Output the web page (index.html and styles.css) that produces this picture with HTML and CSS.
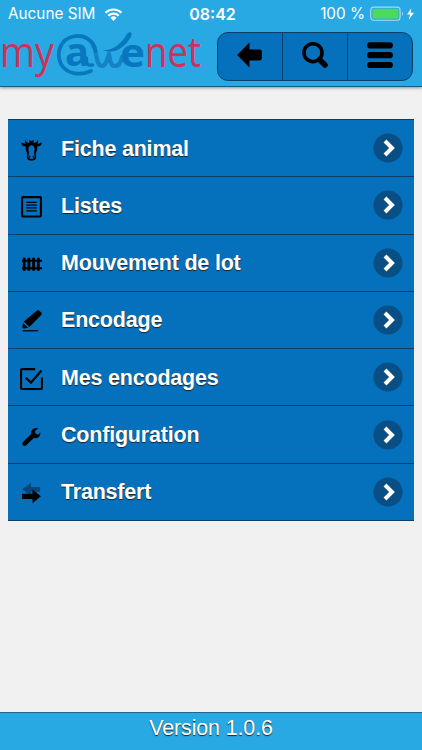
FILE: index.html
```html
<!DOCTYPE html>
<html lang="fr">
<head>
<meta charset="utf-8">
<title>myawenet</title>
<link rel="stylesheet" href="styles.css">
</head>
<body>
<header class="header">
  <div class="status">
    <div class="carrier"><span>Aucune SIM</span>
      <svg class="wifi" viewBox="0 0 18 13"><g fill="none" stroke="#fff" stroke-width="2.2"><path d="M1 4.8a11.4 11.4 0 0 1 16 0M3.8 7.8a7.4 7.4 0 0 1 10.4 0"/></g><path d="M9 13L5.9 9.8a4.5 4.5 0 0 1 6.200 0z" fill="#fff"/></svg>
    </div>
    <div class="clock">08:42</div>
    <div class="power"><span>100 %</span>
      <svg class="battery" viewBox="0 0 48 16"><rect x=".7" y="1" width="30" height="13.4" rx="3" fill="none" stroke="#a4dcf5" stroke-width="1.2"/><rect x="2.5" y="2.7" width="26.5" height="10" rx="1.3" fill="#4cd95f"/><path d="M32.7 5.5q2 2.2 0 4.5z" fill="#a4dcf5"/><path d="M42.2 2L37.8 8.500h3.100l-1.300 5.300 5.200-7h-3.300z" fill="#fff"/></svg>
    </div>
  </div>
  <div class="toolbar">
    <svg class="logo" viewBox="0 0 204 52">
      <g class="logo-red">
        <text x="0" y="37" textLength="54" lengthAdjust="spacingAndGlyphs">my</text>
        <text x="145" y="37" textLength="56" lengthAdjust="spacingAndGlyphs">net</text>
      </g>
      <g class="logo-blue">
        <path d="M93 15C95 18 95.500 20 96 24C97 30 98 36 102 36C106 36 107 29 109 24C110 29 110 36 115 36C119 36 121 32 122 27" fill="none" stroke="#1383c6" stroke-width="4.200" stroke-linecap="round" stroke-linejoin="round"/>
        <path d="M91 41C80 46 66 44 61 34C55 21 62 9 73 6.500C85 4 94 11 95.500 21" fill="none" stroke="#0877bf" stroke-width="3.800" stroke-linecap="round"/>
        <text x="65" y="36" textLength="24" lengthAdjust="spacingAndGlyphs">a</text>
        <text x="120" y="36.500" textLength="25" lengthAdjust="spacingAndGlyphs">e</text>
        <path d="M86.500 28v3q0 5 6 4" fill="none" stroke="#0877bf" stroke-width="3.400" stroke-linecap="round"/>
        <path d="M103 20C113 21 122 13 127 4C130 .5 133 3 131 7C124 18 114 25 103 20" fill="#0877bf"/>
      </g>
    </svg>
    <nav class="buttons">
      <a><svg viewBox="0 0 26 26"><path d="M1 13L12.500 1.500V8H22q2 0 2 2v6q0 2-2 2h-9.500v6.500z"/></svg></a>
      <a><svg viewBox="0 0 28 28"><circle cx="12" cy="11.700" r="9" fill="none" stroke="#000" stroke-width="3.600"/><path d="M18.500 18.500l5.500 5.500" stroke="#000" stroke-width="5.500" stroke-linecap="round"/></svg></a>
      <a><svg viewBox="0 0 28 28"><path d="M4.200 4.400h19.600M4.200 14.200h19.600M4.200 24h19.600" stroke="#000" stroke-width="6.200" stroke-linecap="round"/></svg></a>
    </nav>
  </div>
</header>
<main class="content">
  <ul class="menu">
    <li><svg class="icon" viewBox="0 0 22 22"><path d="M6 1.500Q5 5 9 4.500h4Q17 5 16 1.500q2.500 2.500.5 4.300L21 4.300Q20.500 8 16.500 8.200q.5 3-1.300 6.100l.3 4.700q-1 2.800-4.500 2.800T6.500 19l.3-4.700Q5 11.200 5.500 8.200 1.500 8 1 4.300l4.500 1.500Q3.500 4 6 1.500zM9.500 7.500q-2.500 2-.8 6.300l-.9 4.400q1.200 2 3.200 2t3.200-2l-.9-4.400q1.700-4.300-.8-6.300-1.500-1-3 0z" fill-rule="evenodd"/><path d="M8.800 1.800l2.200 1 2.200-1-.5 4H9.300z"/><path d="M8.500 17.800h1.400M12.100 17.800h1.400" stroke="#000" stroke-width="1.500"/></svg><span>Fiche animal</span><svg class="chevron" viewBox="0 0 30 30"><circle cx="15" cy="15" r="14.600"/><path d="M12 8l7 7-7 7"/></svg></li>
    <li><svg class="icon" viewBox="0 0 22 22"><rect x="2" y="2" width="18" height="18.500" rx=".8" fill="none" stroke="#000" stroke-width="2"/><path d="M6 7h10M6 9.700h10M6 12.400h10M6 15.100h10" stroke="#000" stroke-width="1.200"/></svg><span>Listes</span><svg class="chevron" viewBox="0 0 30 30"><circle cx="15" cy="15" r="14.600"/><path d="M12 8l7 7-7 7"/></svg></li>
    <li><svg class="icon" viewBox="0 0 22 22"><path d="M4 5.500v12.500M8.500 5.500v12.500M13 5.500v12.500M17.500 5.500v12.500" stroke="#000" stroke-width="2.700"/><path d="M2 8.300h19M2 15.500h19" stroke="#000" stroke-width="2"/></svg><span>Mouvement de lot</span><svg class="chevron" viewBox="0 0 30 30"><circle cx="15" cy="15" r="14.600"/><path d="M12 8l7 7-7 7"/></svg></li>
    <li><svg class="icon" viewBox="0 0 22 22"><path d="M16.300 1.400q1-.9 2 0l2.200 2.200q1 1 0 2L9 17.200l-5.500-5zM2.800 13.400l5 4.500-4.200.8q-1.300 0-1.400-1.400z"/><path d="M2.600 20.800h14.800" stroke="#000" stroke-width="1.200"/></svg><span>Encodage</span><svg class="chevron" viewBox="0 0 30 30"><circle cx="15" cy="15" r="14.600"/><path d="M12 8l7 7-7 7"/></svg></li>
    <li><svg class="icon" viewBox="0 0 22 22"><path d="M14.500 2H2q-1 0-1 1v17q0 1 1 1h18q1 0 1-1V10" fill="none" stroke="#000" stroke-width="2"/><path d="M5.500 10.300l5 4.700L20.500 3.300" fill="none" stroke="#000" stroke-width="2.200"/></svg><span>Mes encodages</span><svg class="chevron" viewBox="0 0 30 30"><circle cx="15" cy="15" r="14.600"/><path d="M12 8l7 7-7 7"/></svg></li>
    <li><svg class="icon" viewBox="0 0 22 22"><path d="M4.400 18.700l8.300-7.900" stroke="#000" stroke-width="4.400" stroke-linecap="round"/><path d="M17.600 4.400l-3.200 2 .3 2.600 2.500 1.200 2.100-2.300q.7 3.400-2 5.100-3.200 1.700-5.900-1.200-2.200-3.400.3-6.300 2.400-2.500 5.900-1.100z"/></svg><span>Configuration</span><svg class="chevron" viewBox="0 0 30 30"><circle cx="15" cy="15" r="14.600"/><path d="M12 8l7 7-7 7"/></svg></li>
    <li><svg class="icon" viewBox="0 0 22 22"><path d="M2 8l8.500-6v3.700h8.800v4.600h-8.800V14z" fill="#064679"/><path d="M20 14.600l-8-6.500v4H2v5.200h10v4z"/></svg><span>Transfert</span><svg class="chevron" viewBox="0 0 30 30"><circle cx="15" cy="15" r="14.600"/><path d="M12 8l7 7-7 7"/></svg></li>
  </ul>
</main>
<footer class="footer">Version 1.0.6</footer>
</body>
</html>
```
FILE: styles.css
```css
* { box-sizing: border-box; }
body {
  margin: 0;
  height: 750px;
  display: flex;
  flex-direction: column;
  overflow: hidden;
  background: #f1f1f2;
  font-family: "Liberation Sans", Arial, sans-serif;
}
.header {
  flex: none;
  height: 87px;
  background: #29a9e3;
  border-bottom: 1px solid #125c86;
  box-shadow: 0 1px 3px rgba(0, 0, 0, .4);
}
.status {
  height: 28px;
  padding: 0 5px 0 8px;
  display: grid;
  grid-template-columns: 1fr auto 1fr;
  align-items: center;
  color: #fff;
  font: 15.3px/28px Inter, sans-serif;
}
.carrier, .power { display: flex; align-items: center; }
.carrier { gap: 9px; }
.power { justify-content: flex-end; gap: 5px; }
.clock { font-weight: 600; font-size: 16px; }
.wifi { width: 19px; height: 13px; }
.battery { width: 47px; height: 16px; }
.toolbar {
  display: flex;
  justify-content: space-between;
  padding-right: 9px;
}
.logo { width: 204px; height: 52px; margin-top: 2px; overflow: visible; }
.logo-red { fill: #cb3358; font: 42px "Open Sans", sans-serif; }
.logo-blue { fill: #0877bf; font: bold 40px "Open Sans", sans-serif; }
.buttons {
  display: flex;
  width: 196px;
  height: 49px;
  margin-top: 4px;
  background: #0571bd;
  border: 1px solid #0c3f68;
  border-radius: 11px;
}
.buttons a {
  flex: 1;
  display: flex;
  align-items: center;
  justify-content: center;
}
.buttons a + a { border-left: 1px solid #0c3f68; }
.buttons svg { width: 28px; height: 28px; margin-bottom: 3px; }
.content { flex: 1; padding: 32px 8px 0; }
.menu {
  margin: 0;
  padding: 0;
  list-style: none;
  height: 402px;
  display: flex;
  flex-direction: column;
  border-top: 1px solid #123b62;
}
.menu li {
  flex: 1;
  display: flex;
  align-items: center;
  padding: 2px 11px 0 12px;
  background: #0571bd;
  border-bottom: 1px solid #0c3f68;
  color: #fff;
  font-size: 21.5px;
  font-weight: bold;
  letter-spacing: -.2px;
  text-shadow: 0 1px 1px #222;
}
.menu span { flex: 1; margin-left: 18px; }
.icon { width: 23px; height: 23px; }
.chevron { width: 30px; height: 30px; margin-top: -2px; }
.chevron circle { fill: #074f85; }
.chevron path { fill: none; stroke: #fff; stroke-width: 4; }
.footer {
  flex: none;
  height: 38px;
  border-top: 1px solid #20698e;
  background: #29a9e3;
  color: #fff;
  text-align: center;
  font-size: 21.5px;
  letter-spacing: -.15px;
  line-height: 31px;
  text-shadow: 0 1px 1px #222;
}
```
